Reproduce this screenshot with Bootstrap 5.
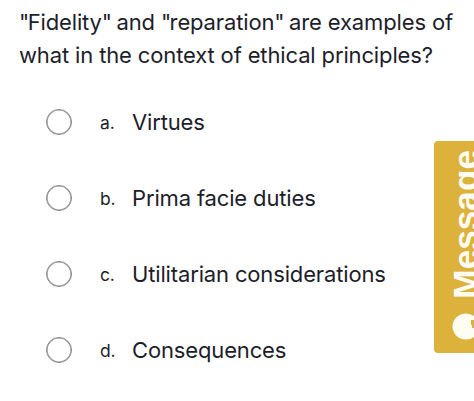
<!DOCTYPE html>
<html lang="en">
<head>
<meta charset="utf-8">
<meta name="viewport" content="width=device-width, initial-scale=1">
<title>Question</title>
<link href="https://cdn.jsdelivr.net/npm/bootstrap@5.3.0/dist/css/bootstrap.min.css" rel="stylesheet">
<style>
body { font-family: Inter, "Liberation Sans", sans-serif; color: #1d1d2b; background: #fff; }
.quiz { height: 401px; padding: 6px 0 0 19px; }
.question { font-size: 22px; line-height: 33px; letter-spacing: -.14px; white-space: nowrap; margin-bottom: 12px; }
.q-text { display: block; width: max-content; }
.quote { letter-spacing: -1.6px; }
.answer { height: 76px; padding-left: 27px; font-size: 22px; line-height: 32px; letter-spacing: -.15px; }
.answer .form-check-input { width: 26px; height: 26px; border: 1px solid #858585; box-shadow: inset 0 0 0 .6px #909090; margin: 0 28px 0 0; flex: none; }
.letter { width: 32px; font-size: 17.5px; padding-top: 1px; flex: none; }
.answer-label { padding-bottom: 1px; white-space: nowrap; }
.message-tab { left: 434px; top: 141px; width: 60px; height: 212px; background: #dcb23c; border-radius: 4px; }
.message-text { left: 12px; top: 9px; writing-mode: vertical-rl; transform: rotate(180deg); font: bold 35.2px/40px "Liberation Sans", sans-serif; color: #fffdf2; }
.bubble { left: 18px; top: 172px; }
</style>
<script src="https://cdn.jsdelivr.net/npm/bootstrap@5.3.0/dist/js/bootstrap.bundle.min.js"></script>
</head>
<body class="overflow-hidden">
<main class="quiz position-relative overflow-hidden">
  <div class="question"><span class="q-text"><span class="quote">"</span>Fidelity<span class="quote">"</span> and <span class="quote">"</span>reparation<span class="quote">"</span> are examples of</span><span class="q-text">what in the context of ethical principles?</span></div>
  <form>
    <div class="answer d-flex align-items-center"><input class="form-check-input" type="radio" name="answer" id="a"><span class="letter">a.</span><label class="answer-label" for="a">Virtues</label></div>
    <div class="answer d-flex align-items-center"><input class="form-check-input" type="radio" name="answer" id="b"><span class="letter">b.</span><label class="answer-label" for="b">Prima facie duties</label></div>
    <div class="answer d-flex align-items-center"><input class="form-check-input" type="radio" name="answer" id="c"><span class="letter">c.</span><label class="answer-label" for="c">Utilitarian considerations</label></div>
    <div class="answer d-flex align-items-center"><input class="form-check-input" type="radio" name="answer" id="d"><span class="letter">d.</span><label class="answer-label" for="d">Consequences</label></div>
  </form>
  <div class="message-tab position-absolute">
    <span class="message-text position-absolute">Message</span>
    <svg class="bubble position-absolute" width="32" height="28" viewBox="0 0 32 28"><ellipse cx="14" cy="13.5" rx="13.5" ry="13" fill="#fffdf2"/><path d="M19 7v5h1v3h9V7z" fill="#dcb23c"/></svg>
  </div>
</main>
</body>
</html>
